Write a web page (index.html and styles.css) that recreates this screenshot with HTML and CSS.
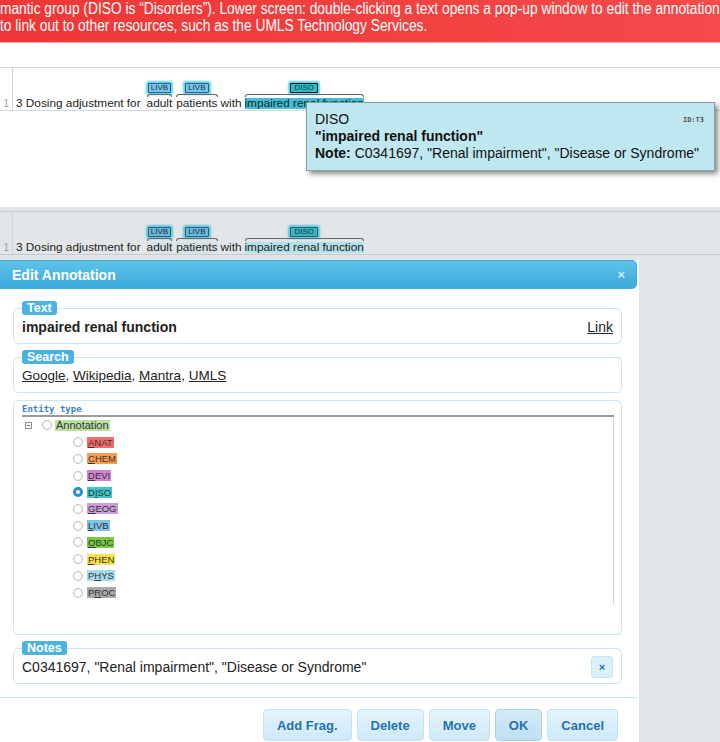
FILE: index.html
```html
<!DOCTYPE html>
<html lang="en">
<head>
    <meta charset="UTF-8">
    <meta name="viewport" content="width=device-width, initial-scale=1.0">
    <title>Edit Annotation</title>
    <link rel="stylesheet" href="styles.css">
</head>
<body>
    <div class="banner">
        <p>mantic group (DISO is “Disorders”). Lower screen: double-clicking a text opens a pop-up window to edit the annotation</p>
        <p>to link out to other resources, such as the UMLS Technology Services.</p>
    </div>

    <div class="screen screen-top">
        <div class="doc-row">
            <div class="lineno">1</div>
            <div class="sentence">
                <span class="word">3 Dosing adjustment for</span>
                <span class="ann first"><span class="label livb">LIVB</span><span class="curly"></span><span class="word">adult</span></span>
                <span class="ann"><span class="label livb">LIVB</span><span class="curly"></span><span class="word">patients</span></span>
                <span class="word">with</span>
                <span class="ann"><span class="label diso hover">DISO</span><span class="curly"></span><span class="word hl">impaired renal function</span></span>
            </div>
        </div>
    </div>

    <div class="tooltip">
        <span class="tip-id">ID:T3</span>
        <div>DISO</div>
        <div><b>"impaired renal function"</b></div>
        <div><b>Note:</b> C0341697, "Renal impairment", "Disease or Syndrome"</div>
    </div>

    <div class="screen screen-lower">
        <div class="doc-row dim">
            <div class="lineno">1</div>
            <div class="sentence">
                <span class="word">3 Dosing adjustment for</span>
                <span class="ann first"><span class="label livb">LIVB</span><span class="curly"></span><span class="word soft">adult</span></span>
                <span class="ann"><span class="label livb">LIVB</span><span class="curly"></span><span class="word soft">patients</span></span>
                <span class="word">with</span>
                <span class="ann"><span class="label diso">DISO</span><span class="curly"></span><span class="word hl-soft">impaired renal function</span></span>
            </div>
        </div>

        <div class="dialog">
            <div class="dialog-title">
                <span>Edit Annotation</span>
                <span class="close">×</span>
            </div>
            <div class="dialog-body">
                <fieldset class="group">
                    <legend>Text</legend>
                    <div class="field-row">
                        <strong>impaired renal function</strong>
                        <a href="#">Link</a>
                    </div>
                </fieldset>
                <fieldset class="group">
                    <legend>Search</legend>
                    <div class="field-row search">
                        <span><a href="#">Google</a>, <a href="#">Wikipedia</a>, <a href="#">Mantra</a>, <a href="#">UMLS</a></span>
                    </div>
                </fieldset>
                <fieldset class="group entity">
                    <div class="entity-head">Entity type</div>
                    <div class="tree">
                        <div class="tree-row root">
                            <span class="expander"></span>
                            <span class="radio"></span>
                            <span class="type t-annotation">Annotation</span>
                        </div>
                        <div class="tree-row child"><span class="radio"></span><span class="type t-anat"><u>A</u>NAT</span></div>
                        <div class="tree-row child"><span class="radio"></span><span class="type t-chem"><u>C</u>HEM</span></div>
                        <div class="tree-row child"><span class="radio"></span><span class="type t-devi"><u>D</u>EVI</span></div>
                        <div class="tree-row child"><span class="radio on"></span><span class="type t-diso">D<u>I</u>SO</span></div>
                        <div class="tree-row child"><span class="radio"></span><span class="type t-geog"><u>G</u>EOG</span></div>
                        <div class="tree-row child"><span class="radio"></span><span class="type t-livb"><u>L</u>IVB</span></div>
                        <div class="tree-row child"><span class="radio"></span><span class="type t-objc"><u>O</u>BJC</span></div>
                        <div class="tree-row child"><span class="radio"></span><span class="type t-phen"><u>P</u>HEN</span></div>
                        <div class="tree-row child"><span class="radio"></span><span class="type t-phys">P<u>H</u>YS</span></div>
                        <div class="tree-row child"><span class="radio"></span><span class="type t-proc">P<u>R</u>OC</span></div>
                    </div>
                </fieldset>
                <fieldset class="group">
                    <legend>Notes</legend>
                    <div class="field-row">
                        <span>C0341697, "Renal impairment", "Disease or Syndrome"</span>
                        <button type="button" class="clear">×</button>
                    </div>
                </fieldset>
            </div>
            <div class="buttons">
                <button type="button">Add Frag.</button>
                <button type="button">Delete</button>
                <button type="button">Move</button>
                <button type="button" class="focus">OK</button>
                <button type="button">Cancel</button>
            </div>
        </div>
    </div>
</body>
</html>
```

FILE: styles.css
```css
body {
    margin: 0;
    width: 720px;
    height: 742px;
    overflow: hidden;
    font-family: "Liberation Sans", Arial, sans-serif;
    color: #222;
    background: #fff;
}
.banner {
    height: 42px;
    background: linear-gradient(90deg, #ef3636, #f44a4a);
    border-bottom: 1px solid #f7a6a6;
    color: #fff;
    font-family: "Liberation Sans", sans-serif;
    font-size: 16px;
    line-height: 17px;
    white-space: nowrap;
    overflow: hidden;
}
.banner p {
    margin: 0;
    /* the caption font of the source is a condensed face */
    transform: scaleX(0.86);
    transform-origin: 0 0;
}
.screen-top {
    height: 140px;
    padding-top: 24px;
}
.screen-lower {
    height: 531px;
    padding-top: 4px;
    background: #e2e6e8;
}

/* sentence row */
.doc-row {
    display: flex;
    height: 42px;
    border-top: 1px solid #cdd8df;
    border-bottom: 1px solid #cdd8df;
}
.doc-row.dim {
    border-color: #c3cbd1;
}
.lineno {
    width: 9px;
    padding-right: 3px;
    border-right: 1px solid #d2d2d2;
    display: flex;
    align-items: flex-end;
    justify-content: flex-end;
    font-size: 10px;
    line-height: 12px;
    color: #999;
}
.sentence {
    display: flex;
    align-items: flex-end;
    gap: 3px;
    padding: 0 0 1px 3px;
}
.word {
    font-size: 11.8px;
    line-height: 11px;
    color: #222;
}
.ann {
    display: flex;
    flex-direction: column;
    align-items: center;
}
.ann.first {
    margin-left: 3px;
}
.ann + .ann {
    margin-left: 1px;
}
.label {
    font-size: 8px;
    line-height: 8px;
    padding: 0 2px;
    border: 1px solid #2b5f7d;
    border-radius: 1px;
    color: #17324a;
    box-shadow: 0 0 2px 2px rgba(38, 196, 236, 0.75);
    margin-bottom: 1px;
}
.label.livb {
    background: #79c6ea;
}
.label.diso {
    background: #2fbdca;
    padding: 0 3px;
}
.label.hover {
    border-color: #111;
}
.dim .label.livb {
    background: #6db6d6;
    box-shadow: 0 0 2px 2px rgba(40, 185, 220, 0.7);
}
.dim .label.diso {
    background: #38b6c0;
    box-shadow: 0 0 2px 2px rgba(40, 185, 220, 0.7);
}
.curly {
    align-self: stretch;
    height: 2px;
    border: 1px solid #666;
    border-bottom: none;
    border-radius: 4px 4px 0 0;
    margin-bottom: 1px;
}
.word.hl {
    background: #3fbfd7;
}
.word.hl-soft {
    background: #b3e1e8;
}
.word.soft {
    background: #d6e1e6;
}

/* hover tooltip */
.tooltip {
    position: absolute;
    top: 102px;
    left: 306px;
    width: 389px;
    padding: 8px 10px 8px 8px;
    background: #bfe7ef;
    border: 1px solid #8a9ea4;
    box-shadow: 3px 3px 5px rgba(0, 0, 0, 0.45);
    font-size: 14px;
    line-height: 17px;
    color: #111;
}
.tip-id {
    position: absolute;
    top: 9px;
    right: 10px;
    font-family: "DejaVu Sans Mono", monospace;
    font-size: 7px;
    font-weight: bold;
    color: #555;
}

/* dialog */
.dialog {
    width: 637px;
    margin-top: 5px;
    padding-right: 2px;
    border-right: 1px solid #cfe7f3;
    background: #fff;
    height: 482px;
}
.dialog-title {
    margin-top: 1px;
    height: 27px;
    padding: 0 11px 0 12px;
    display: flex;
    justify-content: space-between;
    align-items: center;
    background: linear-gradient(#5ec4ea, #3ba9da);
    border: 1px solid #44acdb;
    border-left: none;
    border-radius: 0 5px 5px 0;
    color: #fff;
    font-size: 14px;
    font-weight: bold;
}
.close {
    font-size: 13px;
    color: #d6eefa;
}
.dialog-body {
    padding: 12px 15px 0 13px;
}
.group {
    margin: 6px 0 0;
    padding: 3px 8px 7px;
    border: 1px solid #cbe5f3;
    border-radius: 5px;
    min-width: 0;
}
.group:first-child {
    margin-top: 0;
}
.group legend {
    padding: 0 5px;
    margin: 0;
    background: #4bb3df;
    border-radius: 3px;
    color: #fff;
    font-size: 12.5px;
    font-weight: bold;
    line-height: 14px;
}
.field-row {
    display: flex;
    justify-content: space-between;
    align-items: center;
    font-size: 14px;
    line-height: 18px;
}
.field-row.search {
    font-size: 13.5px;
}
.field-row a {
    color: #222;
}
.group.entity {
    margin-top: 7px;
    padding: 3px 7px 29px 8px;
}
.entity-head {
    font-family: "DejaVu Sans Mono", monospace;
    font-size: 9px;
    font-weight: bold;
    line-height: 11px;
    color: #3b82c4;
    border-bottom: 2px solid #9a9a9a;
}
.tree {
    height: 188px;
    border-right: 1px solid #d6d6d6;
}
.tree-row {
    display: flex;
    align-items: center;
    height: 16.72px;
}
.tree-row.root {
    padding-left: 3px;
}
.tree-row.child {
    padding-left: 51px;
}
.expander {
    position: relative;
    width: 5px;
    height: 5px;
    border: 1px solid #8a8a8a;
    margin-right: 10px;
}
.expander::after {
    content: "";
    position: absolute;
    left: 1px;
    top: 2px;
    width: 3px;
    height: 1px;
    background: #666;
}
.radio {
    width: 8px;
    height: 8px;
    border: 1px solid #bdbdbd;
    border-radius: 50%;
    background: radial-gradient(#fff 40%, #e6e6e6);
    margin-right: 3px;
}
.tree-row.child .radio {
    margin-right: 4px;
}
.radio.on {
    width: 4px;
    height: 4px;
    border: 3px solid #2b8cd7;
    background: #fff;
}
.type {
    font-size: 9.5px;
    line-height: 11px;
    padding: 0 1px;
    color: #333;
}
.t-annotation { background: #b9e2a0; font-size: 11px; }
.t-anat { background: #f26b6b; }
.t-chem { background: #f89b50; }
.t-devi { background: #d283d4; }
.t-diso { background: #3cc6c9; }
.t-geog { background: #cb9dd9; }
.t-livb { background: #7dc3ea; }
.t-objc { background: #78c845; }
.t-phen { background: #f7e24c; }
.t-phys { background: #a2dcec; }
.t-proc { background: #a9a9a9; }
.clear {
    width: 22px;
    height: 22px;
    margin: -2px 0 -2px;
    padding: 0;
    border: 1px solid #c6e4f3;
    border-radius: 3px;
    background: #dcf0fa;
    color: #2673b0;
    font-family: "Liberation Sans", sans-serif;
    font-size: 11px;
    font-weight: bold;
}
.buttons {
    margin-top: 13px;
    border-top: 1px solid #cfe6f2;
    padding: 11px 19px 0 0;
    display: flex;
    justify-content: flex-end;
    gap: 5px;
}
.buttons button {
    height: 32px;
    padding: 0 13px;
    border: 1px solid #c5e3f3;
    border-radius: 4px;
    background: linear-gradient(#e4f4fd, #cfe9f8);
    color: #2472b0;
    font-family: "Liberation Sans", sans-serif;
    font-size: 13px;
    font-weight: bold;
}
.buttons button.focus {
    background: linear-gradient(#d3ebf8, #bfdff2);
    border-color: #a9d3ea;
}
```
